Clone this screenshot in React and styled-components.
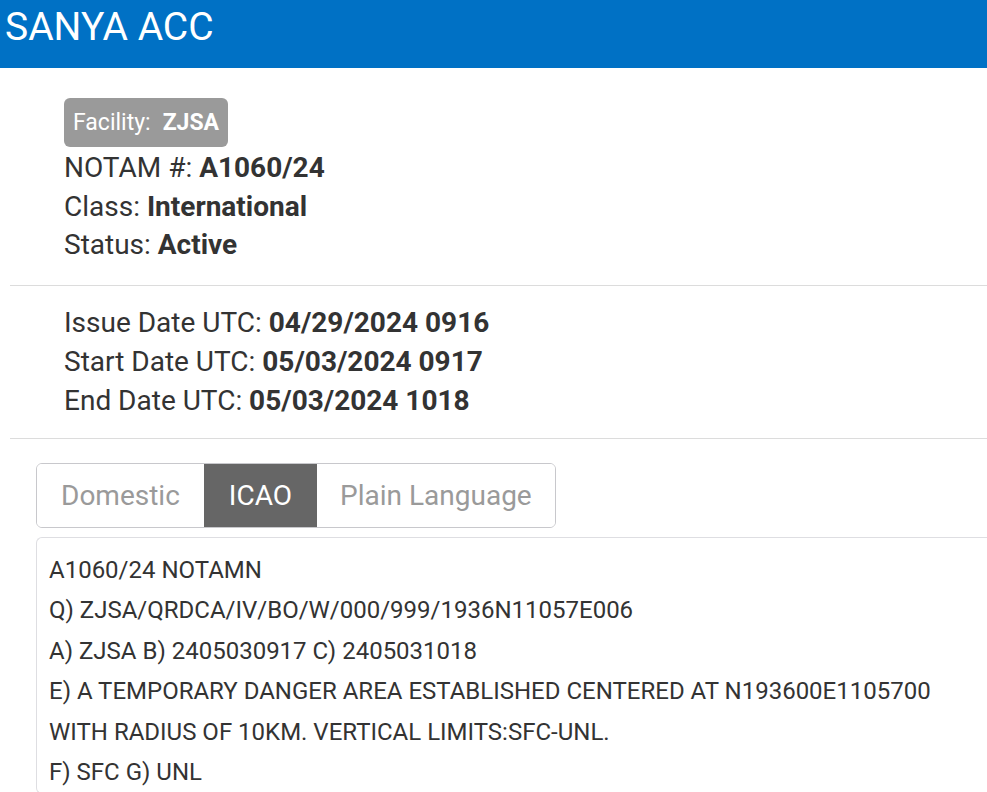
import styled, { createGlobalStyle } from "styled-components";

const GlobalStyle = createGlobalStyle`
    body {
        margin: 0;
        background: #fff;
        font-family: Roboto, "Noto Sans", sans-serif;
        color: #333;
    }
`;

const Header = styled.header`
    height: 68px;
    background: #0071c5;
    color: #fff;
    font-size: 39px;
    line-height: 54px;
    padding-left: 5px;
    box-sizing: border-box;
`;

const Section = styled.section`
    margin-left: 10px;
    padding: ${(p) => p.pad} 0 ${(p) => p.padBottom} 54px;
    border-bottom: 1px solid #dcdcdc;
`;

const Badge = styled.span`
    display: inline-block;
    background: #9a9a9a;
    color: #fff;
    border-radius: 6px;
    font-size: 23px;
    line-height: 49px;
    padding: 0 9px;
    margin-bottom: 2px;
    b {
        margin-left: 12px;
    }
`;

const Line = styled.div`
    font-size: 28px;
    line-height: ${(p) => p.lh || "38.5px"};
    color: #333;
    b {
        font-weight: 700;
    }
`;

const Tabs = styled.div`
    display: inline-flex;
    margin: 24px 0 0 36px;
    border: 1px solid #c8c8cc;
    border-radius: 6px;
    overflow: hidden;
`;

const Tab = styled.div`
    padding: 0 ${(p) => p.px || 24}px;
    height: 63px;
    line-height: 63px;
    font-size: 28px;
    color: ${(p) => (p.active ? "#fff" : "#9a9a9a")};
    background: ${(p) => (p.active ? "#666" : "#fff")};
`;

const Content = styled.div`
    margin: 9px 0 0 36px;
    border: 1px solid #dedee2;
    border-right: none;
    border-radius: 6px 0 0 6px;
    padding: 12px 0 0 12px;
`;

const Row = styled.div`
    font-size: 24px;
    line-height: 40.6px;
    color: #333;
`;

const icaoLines = [
    "A1060/24 NOTAMN",
    "Q) ZJSA/QRDCA/IV/BO/W/000/999/1936N11057E006",
    "A) ZJSA B) 2405030917 C) 2405031018",
    "E) A TEMPORARY DANGER AREA ESTABLISHED CENTERED AT N193600E1105700",
    "WITH RADIUS OF 10KM. VERTICAL LIMITS:SFC-UNL.",
    "F) SFC G) UNL",
];

const App = () => {
    return (
        <>
            <GlobalStyle />
            <Header>SANYA ACC</Header>
            <Section pad="30px" padBottom="20px">
                <Badge>
                    Facility:<b>ZJSA</b>
                </Badge>
                <Line>
                    NOTAM #: <b>A1060/24</b>
                </Line>
                <Line>
                    Class: <b>International</b>
                </Line>
                <Line>
                    Status: <b>Active</b>
                </Line>
            </Section>
            <Section pad="17px" padBottom="18px">
                <Line lh="39px">
                    Issue Date UTC: <b>04/29/2024 0916</b>
                </Line>
                <Line lh="39px">
                    Start Date UTC: <b>05/03/2024 0917</b>
                </Line>
                <Line lh="39px">
                    End Date UTC: <b>05/03/2024 1018</b>
                </Line>
            </Section>
            <Tabs>
                <Tab>Domestic</Tab>
                <Tab active px={25}>ICAO</Tab>
                <Tab px={23}>Plain Language</Tab>
            </Tabs>
            <Content>
                {icaoLines.map((l) => (
                    <Row key={l}>{l}</Row>
                ))}
            </Content>
        </>
    );
};

export default App;
